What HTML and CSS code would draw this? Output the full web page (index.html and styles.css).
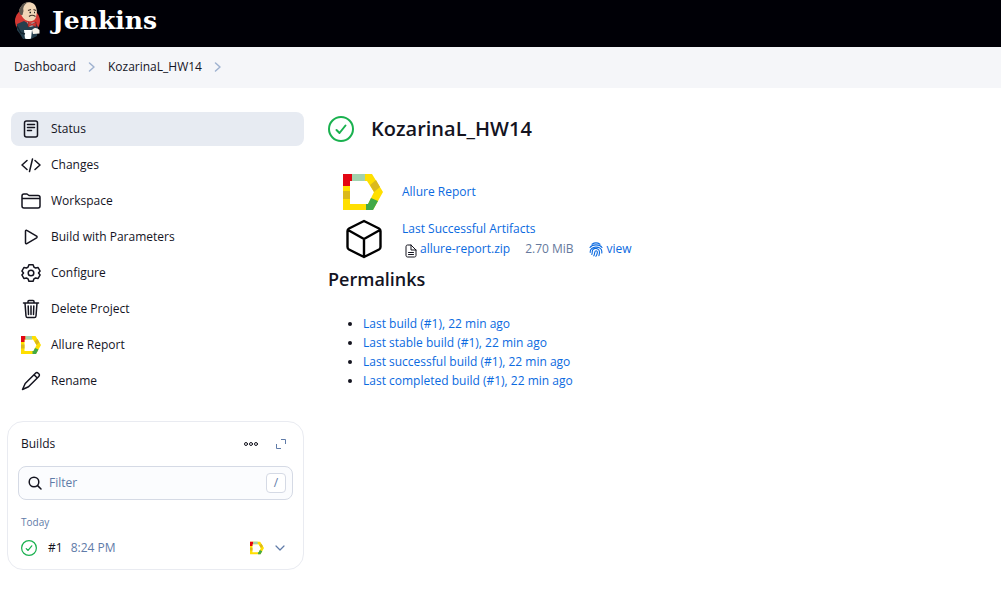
FILE: index.html
```html
<!DOCTYPE html>
<html lang="en">
<head>
<meta charset="utf-8">
<title>KozarinaL_HW14 - Jenkins</title>
<link rel="stylesheet" href="styles.css">
</head>
<body>
<svg class="sprite" aria-hidden="true">
  <symbol id="allure" viewBox="0 0 40 36">
    <path fill="#ffdf00" fill-rule="evenodd" d="M0 0H29L40 18 30 36H0ZM7 7V30H25L31 18 24 7Z"/>
    <path fill="#e30613" d="M0 0H9V7H7V12H0Z"/>
    <path fill="#a2d2ad" d="M9 0H22V7H9Z"/>
    <path fill="#dbb91b" d="M0 17H7V25H0ZM27 11L33 6 37 13 31 18Z"/>
    <path fill="#42a948" d="M23 30H25L28 24 35 27 30 36H23Z"/>
  </symbol>
  <symbol id="success" viewBox="0 0 26 26">
    <g fill="none" stroke="#1ab14f" stroke-width="2" stroke-linecap="round" stroke-linejoin="round"><circle cx="13" cy="13" r="12"/><path d="M8.500 14l3 3 6-7.500"/></g>
  </symbol>
  <symbol id="chevron" viewBox="0 0 8 12">
    <path fill="none" stroke="#9fb2d0" stroke-width="1.500" stroke-linecap="round" stroke-linejoin="round" d="M1.500 2L6 6l-4.500 4"/>
  </symbol>
</svg>

<header class="header">
  <a class="brand" href="#">
    <svg class="brand-logo" viewBox="0 0 28 38" aria-hidden="true">
      <ellipse cx="13.500" cy="19" rx="12.500" ry="12.500" fill="#d33833"/>
      <path d="M3 22l7-3 5 3 6-2 3 5-1 9-6 3-8 0-3-5-3-4z" fill="#263f4e"/>
      <path d="M7 5C9 0 16-1 20 2c3 3 3.500 8 2 13-1 4-5 5-8 4-4-1-6-4-7-7-2-2-2-5 0-7z" fill="#f0d6b7"/>
      <path d="M7 4.500C9 1 12 .5 13 .8 10 3 8.500 6 9.500 9L8.500 13 7 13C4 10 5 7 7 4.500z" fill="#5d564e"/>
      <path d="M14 8.500l3-1M19.500 7.500l2.500 1M15 14.500q3-2.500 6.500 0" fill="none" stroke="#443229" stroke-width="1.200"/>
      <path d="M15.500 10.500h1.500M20 10.500h1" stroke="#222" stroke-width="1.400"/>
      <path d="M13 20l2 5 5-1 1-4-4 1z" fill="#dfe5ea"/>
      <path d="M14 20l4 2 4-2v5l-4-2-4 2z" fill="#d33833" stroke="#731d20" stroke-width=".6"/>
      <path d="M10 28l8 0-1 8.500c-2 .8-4 .8-6 0z" fill="#fff"/>
      <path d="M18 28c3-3 5-2 7.500 0v3.500l-6.500.5z" fill="#f7f2ea"/>
      <path d="M3 24l4 7 4 1" fill="none" stroke="#13242e" stroke-width="1.300"/>
    </svg>
    <span>Jenkins</span>
  </a>
</header>

<nav class="crumbs" aria-label="Breadcrumb">
  <a href="#">Dashboard</a>
  <svg class="crumb-sep" aria-hidden="true"><use href="#chevron"/></svg>
  <a href="#">KozarinaL_HW14</a>
  <svg class="crumb-sep" aria-hidden="true"><use href="#chevron"/></svg>
</nav>

<div class="layout">
  <aside class="sidebar">
    <nav class="tasks" aria-label="Project">
      <a class="task task-active" href="#"><svg class="icon" viewBox="0 0 20 20"><rect x="3.500" y="2" width="13" height="16" rx="2"/><path d="M6.500 5.500h7M6.500 8.500h7M6.500 11.500h4"/></svg>Status</a>
      <a class="task" href="#"><svg class="icon" viewBox="0 0 20 20"><path d="M6 5.500L1 10l5 4.500M14 5.500l5 4.500-5 4.500M11.500 4l-3 12.500"/></svg>Changes</a>
      <a class="task" href="#"><svg class="icon" viewBox="0 0 20 20"><path d="M1 7.500V5a2 2 0 0 1 2-2h3l2 1.500h9a2 2 0 0 1 2 2V15a2 2 0 0 1-2 2H3a2 2 0 0 1-2-2zM1 7.500h18"/></svg>Workspace</a>
      <a class="task" href="#"><svg class="icon" viewBox="0 0 20 20"><path d="M4.500 4.200v11.600c0 .8.700 1.200 1.300.8l9.800-5.800c.6-.4.600-1.200 0-1.600L5.800 3.400c-.6-.4-1.300 0-1.300.8z"/></svg>Build with Parameters</a>
      <a class="task" href="#"><svg class="icon" viewBox="0 0 20 20"><circle cx="10" cy="10" r="2.800"/><path d="M7.900 1.700h4.200l.8 2.400 1.700.9 2.500-.5 2 3.600-1.600 1.900 1.600 1.900-2 3.600-2.500-.5-1.700.9-.8 2.400H7.900l-.8-2.400-1.700-.9-2.500.5-2-3.600L2.500 10 .9 8.100l2-3.600 2.500.5 1.700-.9z"/></svg>Configure</a>
      <a class="task" href="#"><svg class="icon" viewBox="0 0 20 20"><path d="M2.500 4h15M7 4V2.500C7 2 7.500 1.500 8 1.500h4c.5 0 1 .5 1 1V4M4 4l1 13c.1.900.7 1.500 1.500 1.500h7c.8 0 1.400-.6 1.500-1.500l1-13M10 7v8.500M7.200 7l.3 8.500M12.800 7l-.3 8.500"/></svg>Delete Project</a>
      <a class="task" href="#"><svg class="icon"><use href="#allure"/></svg>Allure Report</a>
      <a class="task" href="#"><svg class="icon" viewBox="0 0 20 20"><path d="M4.200 12.500L14.500 2.200c.8-.8 2-.8 2.700 0l.6.600c.8.700.8 1.900 0 2.700L7.500 15.800 1.500 18.500zM13 3.700L16.300 7"/></svg>Rename</a>
    </nav>

    <section class="builds">
      <div class="builds-head">
        <h2>Builds</h2>
        <button class="icon-btn" aria-label="More"><svg class="dots" viewBox="0 0 16 6"><circle cx="3" cy="3" r="1.500"/><circle cx="8" cy="3" r="1.500"/><circle cx="13" cy="3" r="1.500"/></svg></button>
        <button class="icon-btn" aria-label="Expand"><svg class="expand" viewBox="0 0 12 12"><path d="M6 1.500h4.500V6M1.500 6v4.500H6"/></svg></button>
      </div>
      <label class="filter">
        <svg class="search" viewBox="0 0 14 14" aria-hidden="true"><circle cx="6" cy="6" r="4.800"/><path d="M9.600 9.600L13 13"/></svg>
        <input type="text" placeholder="Filter" aria-label="Filter builds">
        <kbd>/</kbd>
      </label>
      <h3>Today</h3>
      <div class="build">
        <svg class="build-status" role="img" aria-label="Success"><use href="#success"/></svg>
        <a class="build-number" href="#">#1</a>
        <a class="build-time" href="#">8:24 PM</a>
        <a class="build-badge" href="#" aria-label="Allure Report"><svg class="allure-small"><use href="#allure"/></svg></a>
        <button class="icon-btn" aria-label="Build menu"><svg class="caret" viewBox="0 0 10 6"><path d="M1 1l4 4 4-4"/></svg></button>
      </div>
    </section>
  </aside>

  <main class="main">
    <div class="title">
      <svg class="title-icon" role="img" aria-label="Success"><use href="#success"/></svg>
      <h1>KozarinaL_HW14</h1>
    </div>

    <div class="summary">
      <svg class="allure-large" aria-hidden="true"><use href="#allure"/></svg>
      <a href="#">Allure Report</a>
      <svg class="cube" viewBox="0 0 40 40" aria-hidden="true"><path d="M21 2L36 9.500Q37.500 10.300 37.500 12V28Q37.500 29.700 36 30.500L21 38 6 30.500Q4.500 29.700 4.500 28V12Q4.500 10.300 6 9.500ZM5 11l16 9 16-9M21 20v18"/></svg>
      <div>
        <a href="#">Last Successful Artifacts</a>
        <div class="artifact">
          <svg class="file" viewBox="0 0 12 14" aria-hidden="true"><path d="M1 2.500C1 1.600 1.600 1 2.500 1H6l5 5v5.500c0 .9-.6 1.500-1.500 1.500h-7C1.600 13 1 12.400 1 11.500zM6 1v5h5M3.500 8.500h5M3.500 10.500h5"/></svg>
          <a href="#">allure-report.zip</a>
          <span class="size">2.70 MiB</span>
          <a class="view" href="#"><svg class="finger" viewBox="0 0 14 15" aria-hidden="true"><path d="M3 2.200C5.500.5 8.500.5 11 2.200M1 5.500C3.500 2 10.500 2 13 5.500M1.200 10.500C.5 3.500 13 3.500 12.800 9.500v1.500M2.800 12.500C3.800 10 2.600 8.500 4.200 7.200c2.300-1.800 6.300-.5 6.300 2.800 0 1.300-.2 2.500-.6 3.700M4.800 13.800C6.200 11.500 5 8.700 7 8.700s1.600 3-.1 5.600"/></svg>view</a>
        </div>
      </div>
    </div>

    <h2 class="permalinks-title">Permalinks</h2>
    <ul class="permalinks">
      <li><a href="#">Last build (#1), 22 min ago</a></li>
      <li><a href="#">Last stable build (#1), 22 min ago</a></li>
      <li><a href="#">Last successful build (#1), 22 min ago</a></li>
      <li><a href="#">Last completed build (#1), 22 min ago</a></li>
    </ul>
  </main>
</div>
</body>
</html>
```
FILE: styles.css
```css
* { box-sizing: border-box; }

body {
  margin: 0;
  background: #fff;
  color: #14141f;
  font: 12px/20px "Open Sans", "Noto Sans", sans-serif;
}

h1, h2, h3 { margin: 0; }
a { color: #0b6ae0; text-decoration: none; }
svg { display: block; flex: none; }

button {
  padding: 0;
  border: 0;
  background: none;
  font: inherit;
}

.sprite { position: absolute; width: 0; height: 0; }

.header {
  display: flex;
  align-items: center;
  height: 47px;
  padding: 0 14px;
  background: #000006;
}

.brand {
  display: flex;
  align-items: center;
  gap: 10px;
  padding-bottom: 6px;
  color: #fff;
  font: bold 25px/36px "DejaVu Serif", serif;
}
.brand-logo { width: 28px; height: 38px; }

.crumbs {
  display: flex;
  align-items: center;
  gap: 12px;
  height: 41px;
  padding: 0 14px 1px;
  background: #f5f6f9;
}
.crumbs a { color: #14141f; }
.crumb-sep { width: 8px; height: 12px; }

.layout {
  display: grid;
  grid-template-columns: 297px 1fr;
  gap: 24px;
  padding: 24px 8px 24px 7px;
}

.tasks {
  display: grid;
  gap: 2px;
  margin: 0 0 23px 4px;
}
.task {
  display: flex;
  align-items: center;
  gap: 10px;
  height: 34px;
  padding: 0 10px;
  border-radius: 8px;
  color: #14141f;
}
.task-active { background: #e7ebf2; }

.icon {
  width: 20px;
  height: 20px;
}
.icon, .dots, .expand, .search, .caret, .cube, .file, .finger {
  fill: none;
  stroke: #14141f;
  stroke-width: 1.5;
  stroke-linecap: round;
  stroke-linejoin: round;
}
.icon use { stroke: none; }

.builds {
  padding: 10px 10px 7px;
  border: 1px solid #e9ebf1;
  border-radius: 16px;
}
.builds-head {
  display: flex;
  align-items: center;
  gap: 16px;
  padding: 0 6px 0 3px;
  height: 24px;
}
.builds h2 {
  flex: 1;
  font-size: 12px;
  font-weight: 400;
}
.dots { width: 16px; height: 6px; stroke-width: 1; }
.expand { width: 12px; height: 12px; stroke: #5f7ba8; stroke-width: 1; stroke-linecap: butt; }

.filter {
  display: flex;
  align-items: center;
  gap: 7px;
  height: 34px;
  margin-top: 10px;
  padding: 0 6px 0 9px;
  border: 1px solid #d5dae5;
  border-radius: 8px;
  background: #fbfcfe;
}
.search { width: 14px; height: 14px; }
.filter input {
  flex: 1;
  min-width: 0;
  padding: 0;
  border: 0;
  outline: 0;
  background: none;
  color: #14141f;
  font: inherit;
}
.filter input::placeholder { color: #5f7ba8; opacity: 1; }
.filter kbd {
  width: 20px;
  border: 1px solid #d5dae5;
  border-radius: 4px;
  background: #fff;
  color: #5f7ba8;
  font: 12px/18px "Open Sans", sans-serif;
  text-align: center;
}

.builds h3 {
  margin: 12px 3px 2px;
  color: #5f7ba8;
  font-size: 10px;
  font-weight: 400;
}
.build {
  display: flex;
  align-items: center;
  gap: 8px;
  height: 28px;
  padding: 0 8px 0 3px;
}
.build-status { width: 16px; height: 16px; margin-right: 3px; }
.build-number { color: #14141f; }
.build-time { flex: 1; color: #5f7ba8; }
.allure-small { width: 14px; height: 14px; }
.build-badge { margin-right: 3px; }
.caret { width: 10px; height: 6px; stroke: #5f7ba8; stroke-width: 1.2; }

.title {
  display: flex;
  align-items: center;
  gap: 17px;
  height: 34px;
}
.title-icon { width: 26px; height: 26px; }
.title h1 { font-size: 20px; font-weight: 600; }

.summary {
  display: grid;
  grid-template-columns: 40px 1fr;
  align-items: center;
  gap: 7px 19px;
  margin: 26px 0 0 15px;
}
.allure-large { width: 40px; height: 40px; }
.cube { width: 40px; height: 40px; stroke: #000; stroke-width: 2.4; }

.artifact {
  display: flex;
  align-items: center;
}
.file { width: 12px; height: 14px; margin: 3px 3px 0; stroke-width: 1; }
.size { margin: 0 15px; color: #66799c; }
.view { display: flex; align-items: center; gap: 4px; }
.finger { width: 14px; height: 15px; stroke: #0b6ae0; stroke-width: 1.1; }

.permalinks-title {
  margin-top: 6px;
  font-size: 18px;
  font-weight: 600;
  line-height: 28px;
}
.permalinks {
  margin: 21px 0 0;
  padding-left: 35px;
  line-height: 19px;
}
```
